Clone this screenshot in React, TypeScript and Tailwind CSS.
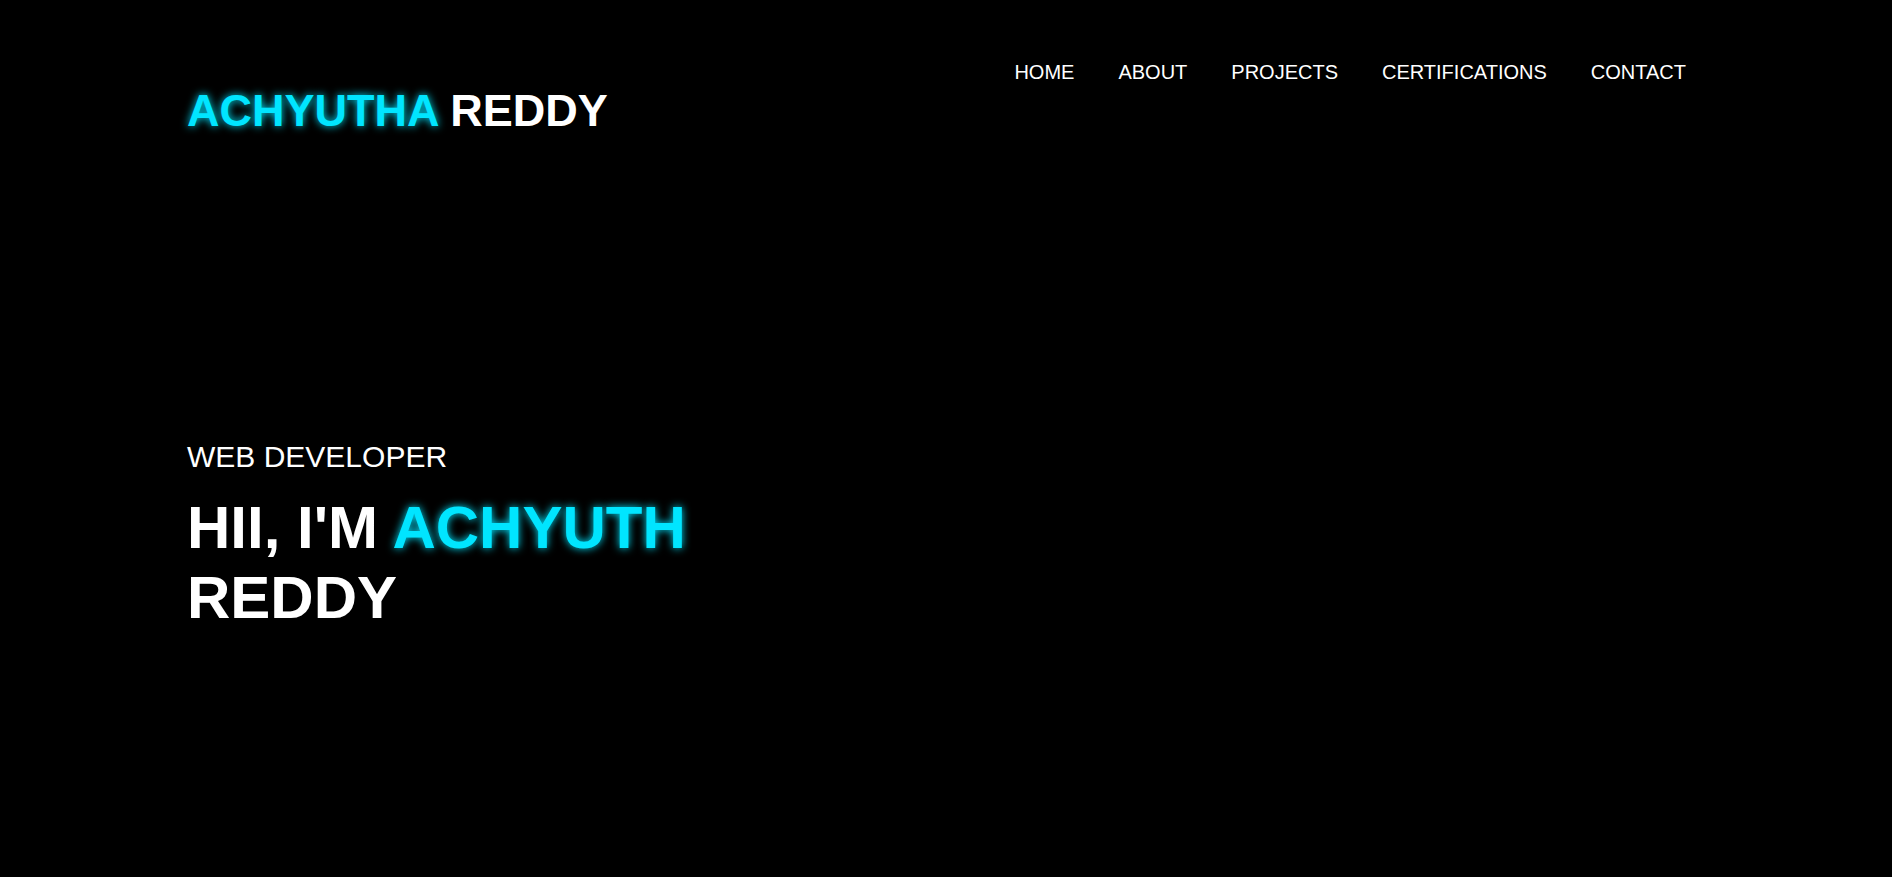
const NAV_LINKS = ["HOME", "ABOUT", "PROJECTS", "CERTIFICATIONS", "CONTACT"];

const App = () => {
  return (
    <main className="min-h-screen w-full bg-black text-white font-['Liberation_Sans',Arial,sans-serif]">
      <header className="flex items-start justify-between pl-[187px] pr-[206px] pt-[58px]">
        <h1 className="mt-[30px] text-[45px] leading-none font-bold">
          <span className="text-[#00e5ff] [text-shadow:0_0_8px_#00e5ff]">ACHYUTHA</span>{" "}
          <span>REDDY</span>
        </h1>

        <nav className="flex items-center gap-[44px]">
          {NAV_LINKS.map((link) => (
            <a key={link} href="#" className="text-[20px] leading-[28px] text-white">
              {link}
            </a>
          ))}
        </nav>
      </header>

      <section className="mt-[309px] flex flex-col pl-[187px]">
        <p className="text-[30px] leading-none">WEB DEVELOPER</p>
        <h2 className="mt-[21px] text-[60px] leading-[70px] font-bold">
          HII, I'M{" "}
          <span className="text-[#00e5ff] [text-shadow:0_0_8px_#00e5ff]">ACHYUTH</span>
          <br />
          REDDY
        </h2>
      </section>
    </main>
  );
};

export default App;
